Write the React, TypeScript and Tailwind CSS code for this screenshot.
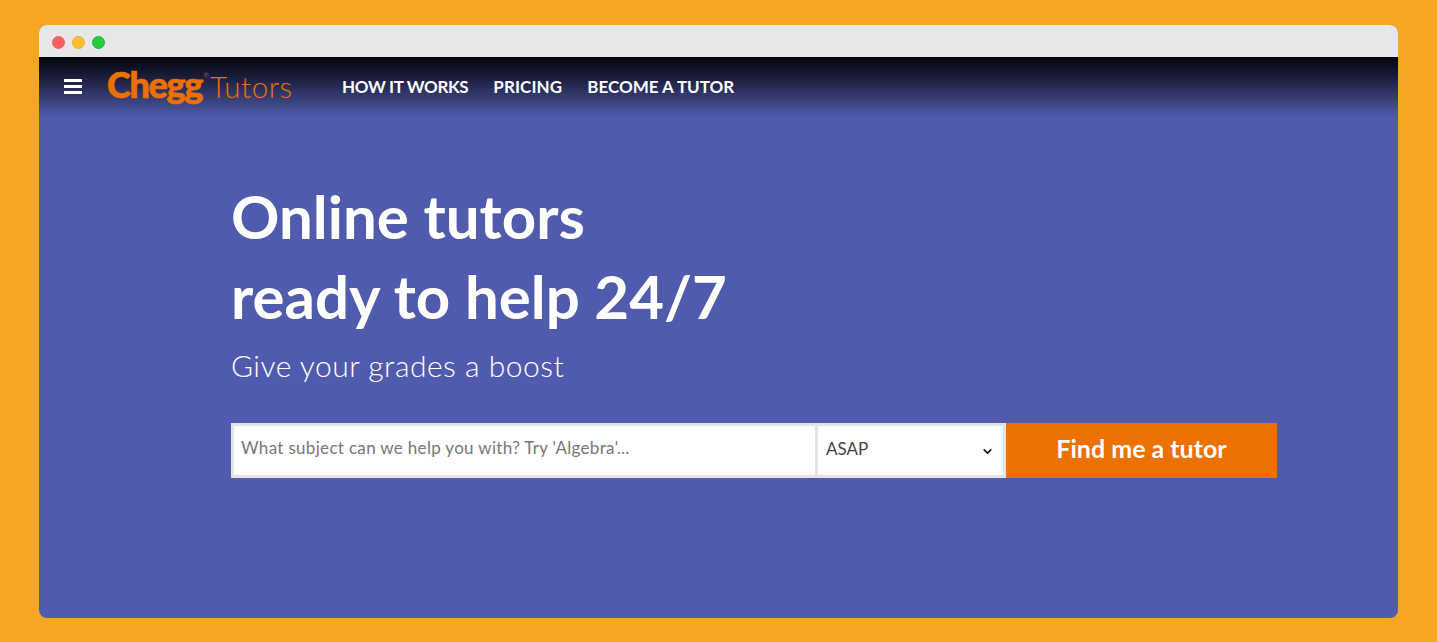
import { ChevronDown } from "lucide-react";

const lato = "font-['Lato','Noto_Sans',sans-serif]";

function Nav() {
  return (
    <div className="flex h-[60px] items-center bg-gradient-to-b from-[#05050c] to-[#515bad] pb-[2px]">
      <div className="ml-[25px] flex w-[18px] flex-col gap-[3px]">
        <span className="h-[3px] bg-white" />
        <span className="h-[3px] bg-white" />
        <span className="h-[3px] bg-white" />
      </div>
      <div className="ml-[25px] mb-[4px] flex w-[185px] items-baseline text-[#eb7100]">
        <span className="text-[36px] leading-none font-black tracking-[-1.3px] [-webkit-text-stroke:0.7px_#eb7100]">Chegg</span>
        <span className="mb-auto mt-[6px] ml-[1px] text-[7px] leading-none text-[#8a5a30]">®</span>
        <span className="ml-[1px] text-[29.5px] leading-none font-light tracking-[0.6px]">Tutors</span>
      </div>
      <nav className="ml-[50px] mt-[2px] flex gap-[25px] text-[17px] font-bold text-white">
        <a className="tracking-[-0.35px]">HOW IT WORKS</a>
        <a className="tracking-[0.1px]">PRICING</a>
        <a>BECOME A TUTOR</a>
      </nav>
    </div>
  );
}

function SearchForm() {
  return (
    <form className="mt-[38px] flex h-[55px] w-[1046px]">
      <div className="flex w-[587px] items-center border-[3px] border-[#e4e4e6] bg-white pb-[6px] pl-[7px] text-[17px] tracking-[0.32px] text-[#777777]">
        What subject can we help you with? Try 'Algebra'...
      </div>
      <div className="flex w-[188px] items-center justify-between border-[3px] border-l-0 border-[#e4e4e6] bg-white pb-[3px] pl-[8px] pr-[9px] text-[17px] text-[#444444]">
        ASAP
        <ChevronDown size={13} strokeWidth={3} className="mt-[5px] text-[#111111]" />
      </div>
      <button type="button" className="flex-1 bg-[#eb7100] pb-[3px] text-[25px] font-bold text-white">
        Find me a tutor
      </button>
    </form>
  );
}

export default function App() {
  return (
    <div className={`h-[642px] w-[1437px] overflow-hidden bg-[#f6a623] pl-[39px] pt-[25px] ${lato}`}>
      <div className="flex h-[593px] w-[1359px] flex-col overflow-hidden rounded-[8px] bg-[#515bad]">
        <div className="flex h-[32px] items-center gap-[7px] bg-[#e7e7e7] pl-[13px] pt-[2px]">
          <span className="size-[13px] rounded-full border border-[#f0605c] bg-[#ff5f5b]" />
          <span className="size-[13px] rounded-full border border-[#f0ae35] bg-[#ffbd2f]" />
          <span className="size-[13px] rounded-full border border-[#22b53c] bg-[#27c93f]" />
        </div>
        <Nav />
        <main className="pl-[192px] pt-[59px] text-white">
          <h1 className="text-[60px] leading-[80px] font-bold">
            Online tutors
            <br />
            ready to help 24/7
          </h1>
          <p className="mt-[9px] text-[30px] leading-[40px] font-light tracking-[0.5px]">Give your grades a boost</p>
          <SearchForm />
        </main>
      </div>
    </div>
  );
}
